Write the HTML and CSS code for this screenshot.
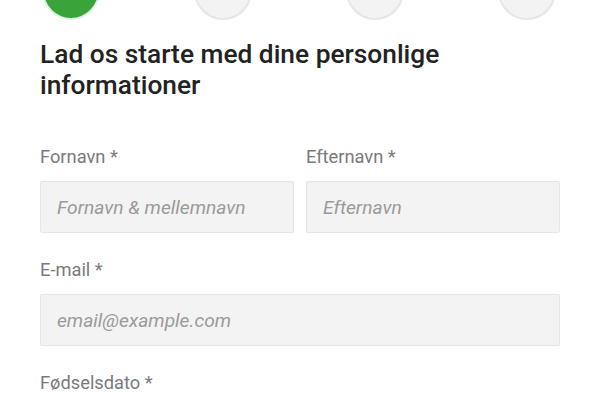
FILE: index.html
```html
<!DOCTYPE html>
<html lang="da">
<head>
<meta charset="utf-8">
<link rel="stylesheet" href="styles.css">
</head>
<body>
<div class="page">
  <div class="steps">
    <span class="step step-done"></span>
    <span class="step"></span>
    <span class="step"></span>
    <span class="step"></span>
  </div>
  <h1 class="title">Lad os starte med dine personlige informationer</h1>
  <form class="form">
    <div class="row">
      <div class="field">
        <label class="label">Fornavn *</label>
        <input class="input" type="text" placeholder="Fornavn &amp; mellemnavn">
      </div>
      <div class="field">
        <label class="label">Efternavn *</label>
        <input class="input" type="text" placeholder="Efternavn">
      </div>
    </div>
    <div class="field">
      <label class="label">E-mail *</label>
      <input class="input" type="text" placeholder="email@example.com">
    </div>
    <div class="field">
      <label class="label">Fødselsdato *</label>
    </div>
  </form>
</div>
</body>
</html>
```

FILE: styles.css
```css
* { box-sizing: border-box; }
html, body { margin: 0; padding: 0; background: #fff; }
body { font-family: Roboto, "Liberation Sans", sans-serif; overflow: hidden; height: 400px; }
.page { padding: 0 40px; }
.steps {
  display: flex;
  gap: 94px;
  margin-top: -38px;
  padding-left: 2px;
}
.step {
  width: 58px;
  height: 58px;
  border-radius: 50%;
  background: #f3f3f3;
  border: 2px solid #e6e6e6;
  flex: none;
}
.step-done {
  background: #3aa33a;
  border-color: #e3f0e3;
}
.title {
  margin: 19px 0 0;
  font-size: 26.3px;
  font-weight: 500;
  line-height: 31px;
  color: #222;
  width: 470px;
}
.form { margin-top: 44px; display: flex; flex-direction: column; gap: 25px; }
.row { display: flex; gap: 12px; }
.row .field { flex: 1; }
.field { display: flex; flex-direction: column; }
.label {
  font-size: 18.3px;
  line-height: 24px;
  color: #7a7a7a;
  margin-bottom: 12px;
}
.input {
  height: 52px;
  width: 100%;
  background: #f3f3f3;
  border: 1px solid #e6e6e6;
  border-radius: 2px;
  padding: 0 16px;
  font-family: Roboto, "Liberation Sans", sans-serif;
  font-size: 19.2px;
  color: #333;
}
.input::placeholder { color: #9a9a9a; font-style: italic; }
```
